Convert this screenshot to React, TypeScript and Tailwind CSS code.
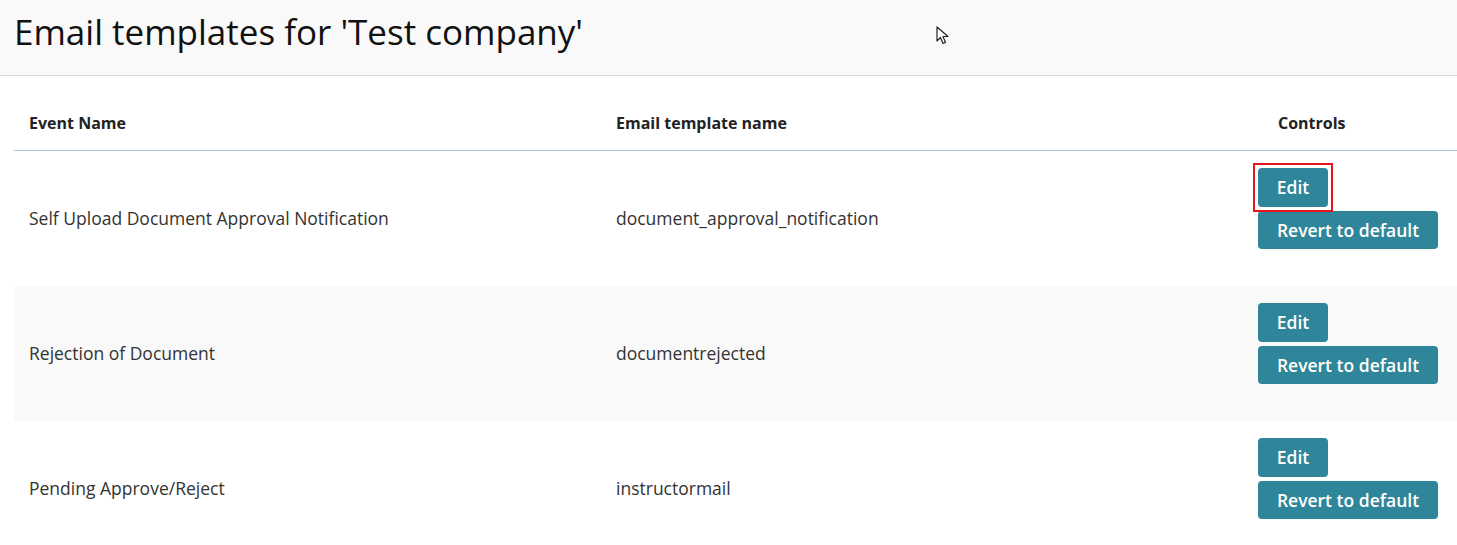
import React from 'react';

const rows = [
    { event: 'Self Upload Document Approval Notification', template: 'document_approval_notification', focused: true },
    { event: 'Rejection of Document', template: 'documentrejected', focused: false },
    { event: 'Pending Approve/Reject', template: 'instructormail', focused: false },
];

function Cursor() {
    return (
        <svg className="absolute left-[936px] top-[26px]" width="14" height="20" viewBox="0 0 14 20">
            <path d="M1 1 L1 15 L4.5 11.5 L7 17.5 L9.5 16.5 L7 10.5 L12 10.5 Z" fill="#fff" stroke="#222" strokeWidth="1.2" strokeLinejoin="round" />
        </svg>
    );
}

export default function App() {
    return (
        <div className="relative min-h-[545px] bg-white text-[#333]" style={{ fontFamily: '"Open Sans", "Noto Sans", sans-serif' }}>
            <header className="h-[76px] bg-[#f9f9f9] border-b border-[#d6d9dd] pl-[14px] pt-[8px]">
                <h1 className="text-[35px] leading-[47px] text-[#111]">Email templates for 'Test company'</h1>
            </header>
            <Cursor />

            <div className="pl-[14px] pt-[20px]">
                <div className="flex h-[55px] items-center border-b border-[#a3cdd3] text-[16px] font-bold text-[#222]">
                    <div className="w-[587px] pl-[15px]">Event Name</div>
                    <div className="w-[642px] pl-[15px]">Email template name</div>
                    <div className="flex-1 pl-[35px]">Controls</div>
                </div>

                {rows.map((row, i) => (
                    <div key={i} className={`flex h-[135px] text-[17.5px] ${i === 1 ? 'bg-[#f9f9f9]' : 'bg-white'}`}>
                        <div className="w-[587px] pl-[15px] flex items-center">{row.event}</div>
                        <div className="w-[642px] pl-[15px] flex items-center">{row.template}</div>
                        <div className="flex-1 pl-[15px] pt-[17px] flex flex-col items-start gap-[4px]">
                            <div className="relative">
                                <button className="h-[39px] w-[70px] rounded-[4px] bg-[#2f8599] text-white text-[17.5px] font-semibold">
                                    Edit
                                </button>
                                {row.focused && (
                                    <span className="pointer-events-none absolute -inset-[5px] border-2 border-[#e8141b]" />
                                )}
                            </div>
                            <button className="h-[38px] w-[180px] rounded-[4px] bg-[#2f8599] text-white text-[17.5px] font-semibold">
                                Revert to default
                            </button>
                        </div>
                    </div>
                ))}
            </div>
        </div>
    );
}
